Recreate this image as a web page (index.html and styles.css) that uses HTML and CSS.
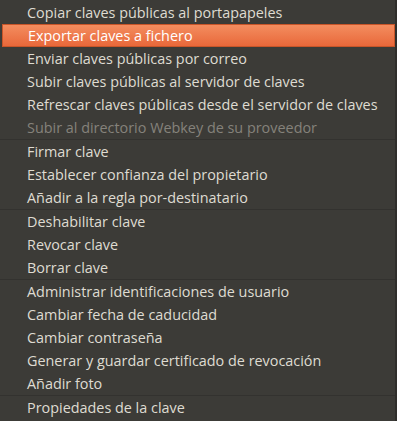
FILE: index.html
```html
<!DOCTYPE html>
<html lang="es">
<head>
	<meta charset="UTF-8">
	<title>Menú de clave</title>
	<link rel="stylesheet" href="styles.css">
</head>
<body>
<ul class="menu">
	<li class="item">Copiar claves públicas al portapapeles</li>
	<li class="item active">Exportar claves a fichero</li>
	<li class="item">Enviar claves públicas por correo</li>
	<li class="item">Subir claves públicas al servidor de claves</li>
	<li class="item">Refrescar claves públicas desde el servidor de claves</li>
	<li class="item disabled">Subir al directorio Webkey de su proveedor</li>
	<li class="sep"></li>
	<li class="item">Firmar clave</li>
	<li class="item">Establecer confianza del propietario</li>
	<li class="item">Añadir a la regla por-destinatario</li>
	<li class="sep"></li>
	<li class="item">Deshabilitar clave</li>
	<li class="item">Revocar clave</li>
	<li class="item">Borrar clave</li>
	<li class="sep"></li>
	<li class="item">Administrar identificaciones de usuario</li>
	<li class="item">Cambiar fecha de caducidad</li>
	<li class="item">Cambiar contraseña</li>
	<li class="item">Generar y guardar certificado de revocación</li>
	<li class="item">Añadir foto</li>
	<li class="sep"></li>
	<li class="item">Propiedades de la clave</li>
</ul>
</body>
</html>
```

FILE: styles.css
```css
*{
	margin: 0;
	padding: 0;
	box-sizing: border-box;
}
body{
	background: #3c3b37;
	font-family: "Open Sans", "DejaVu Sans", sans-serif;
	font-size: 14.4px;
	color: #dfdbd2;
}
.menu{
	list-style: none;
	width: 397px;
	height: 421px;
	padding: 1px 0 2px;
	border-right: 2px solid #2f2e2b;
	background: #3c3b37;
}
.item{
	height: 23px;
	line-height: 23px;
	padding-left: 27px;
	white-space: nowrap;
}
.item.active{
	margin: 0 0 0 2px;
	padding-left: 25px;
	color: #ffffff;
	background: linear-gradient(#f38d5f, #e9683a);
	border: 1px solid #c85529;
	line-height: 21px;
}
.item.disabled{
	color: #85827b;
}
.sep{
	height: 1px;
	background: #33322f;
}
```
